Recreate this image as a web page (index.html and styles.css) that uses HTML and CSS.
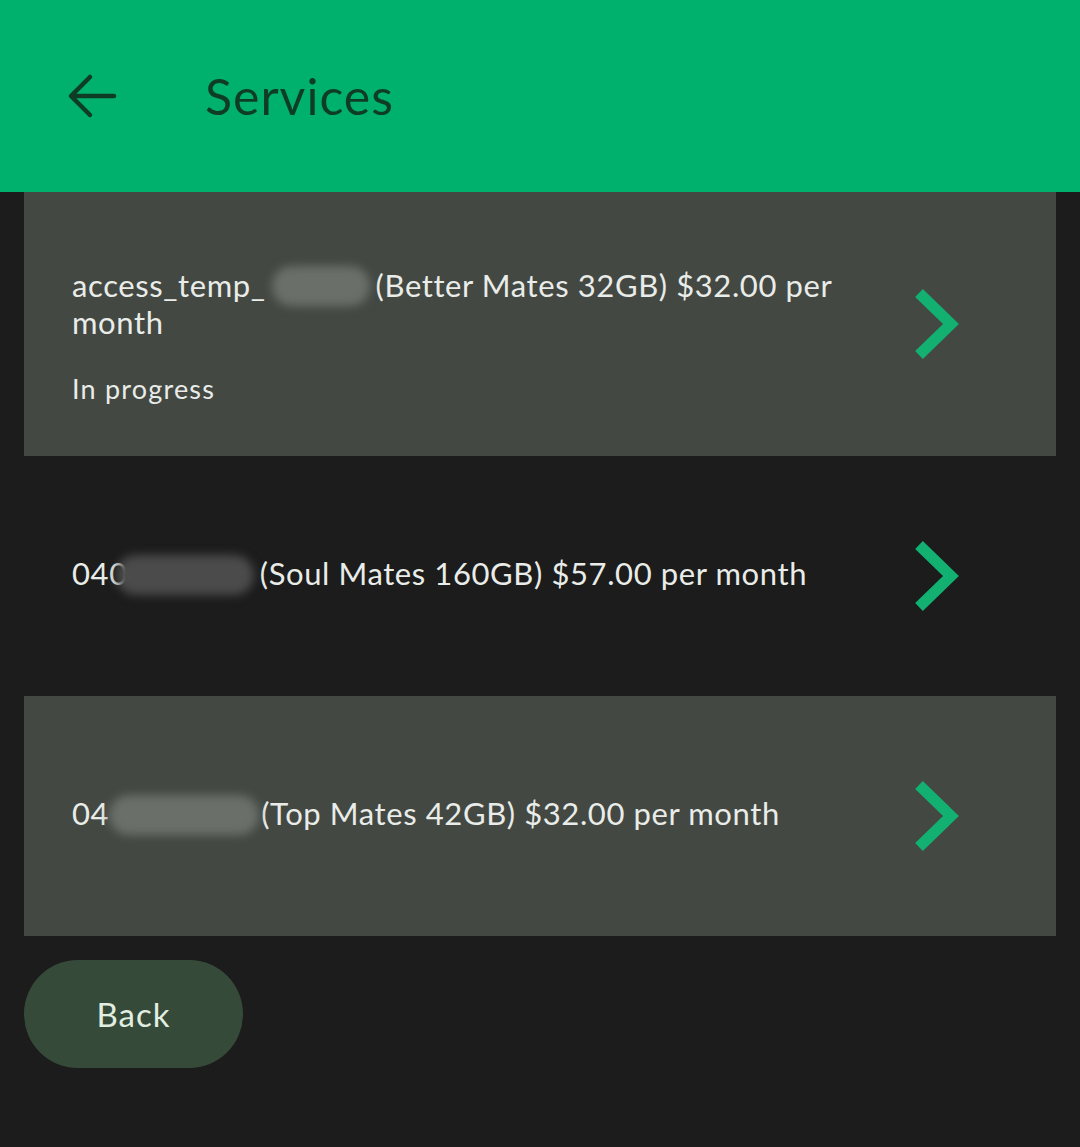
FILE: index.html
```html
<!DOCTYPE html>
<html>
<head>
<meta charset="utf-8">
<link rel="stylesheet" href="styles.css">
</head>
<body>
<header class="topbar">
  <svg class="back-icon" width="52" height="46" viewBox="0 0 52 46"><path d="M48 23H6M24 4L5 23l19 19" fill="none" stroke="#0f3d24" stroke-width="4.5" stroke-linecap="round" stroke-linejoin="round"/></svg>
  <h1 class="title">Services</h1>
</header>
<main class="list">
  <div class="item card">
    <div class="item-text">
      <div class="line">access_temp_<span class="blur b1"></span>(Better Mates 32GB) $32.00 per month</div>
      <div class="status">In progress</div>
    </div>
    <svg class="chev" width="50" height="72" viewBox="0 0 50 72"><path d="M6 5l32 31L6 67" fill="none" stroke="#12b172" stroke-width="11"/></svg>
  </div>
  <div class="item">
    <div class="item-text">
      <div class="line">040<span class="blur b2"></span>(Soul Mates 160GB) $57.00 per month</div>
    </div>
    <svg class="chev" width="50" height="72" viewBox="0 0 50 72"><path d="M6 5l32 31L6 67" fill="none" stroke="#12b172" stroke-width="11"/></svg>
  </div>
  <div class="item card">
    <div class="item-text">
      <div class="line">04<span class="blur b3"></span>(Top Mates 42GB) $32.00 per month</div>
    </div>
    <svg class="chev" width="50" height="72" viewBox="0 0 50 72"><path d="M6 5l32 31L6 67" fill="none" stroke="#12b172" stroke-width="11"/></svg>
  </div>
  <div class="actions">
    <button class="back-btn">Back</button>
  </div>
</main>
</body>
</html>
```
FILE: styles.css
```css
html, body {
  margin: 0;
  padding: 0;
  background: #1b1c1b;
  font-family: Lato, "Open Sans", sans-serif;
  color: #e9ece8;
}
.topbar {
  height: 192px;
  background: #00b16e;
  display: flex;
  align-items: center;
  padding-left: 66px;
  box-sizing: border-box;
}
.back-icon {
  display: block;
  margin-top: 0;
}
.title {
  margin: 0 0 0 87px;
  font-weight: 400;
  font-size: 50px;
  color: #0f3d24;
  letter-spacing: 1px;
}
.list {
  padding: 0 24px;
}
.item {
  height: 240px;
  display: flex;
  align-items: center;
  padding: 0 93px 0 48px;
}
.item.card {
  background: #434843;
}
.item:first-child {
  height: 264px;
}
.item-text {
  flex: 1;
  padding-right: 60px;
}
.item:first-child .item-text {
  margin-top: 26px;
}
.line {
  font-size: 31px;
  line-height: 32px;
  letter-spacing: 0.6px;
}
.blur {
  display: inline-block;
  vertical-align: middle;
  height: 40px;
  border-radius: 20px;
  background: #6e736e;
  filter: blur(5px);
  margin-top: -6px;
}
.b1 { width: 98px; margin-left: 6px; margin-right: 6px; background: #6a6f6a; }
.b2 { width: 138px; margin-left: -12px; margin-right: 6px; background: #4a4b4a; }
.b3 { width: 150px; margin-right: 2px; background: #6a6f6a; }
.status {
  margin-top: 34px;
  font-size: 27px;
  letter-spacing: 1.2px;
}
.chev {
  display: block;
  flex: none;
}
.actions {
  padding-top: 24px;
}
.back-btn {
  width: 219px;
  height: 108px;
  border: none;
  border-radius: 54px;
  background: #364a3a;
  color: #e2efe0;
  font-family: Lato, "Open Sans", sans-serif;
  font-size: 33px;
  letter-spacing: 1px;
}
```
